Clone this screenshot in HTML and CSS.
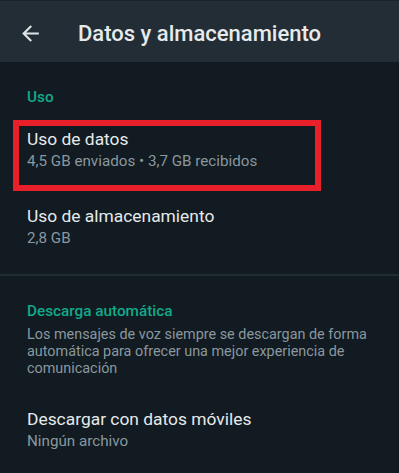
FILE: index.html
```html
<!DOCTYPE html>
<html lang="es">
<head>
<meta charset="utf-8">
<title>Datos y almacenamiento</title>
<link rel="stylesheet" href="styles.css">
</head>
<body>
<header class="topbar">
  <svg class="back" viewBox="0 0 24 24" width="25" height="25" aria-hidden="true"><path d="M20 11H7.83l5.59-5.59L12 4l-8 8 8 8 1.41-1.41L7.83 13H20v-2z" fill="#dfe4e6"/></svg>
  <h1 class="title">Datos y almacenamiento</h1>
</header>
<main>
  <section class="section first">
    <div class="label">Uso</div>
    <div class="item highlighted">
      <div class="item-title">Uso de datos</div>
      <div class="item-sub">4,5 GB enviados • 3,7 GB recibidos</div>
      <span class="mark"></span>
    </div>
    <div class="item">
      <div class="item-title">Uso de almacenamiento</div>
      <div class="item-sub">2,8 GB</div>
    </div>
  </section>
  <section class="section">
    <div class="label">Descarga automática</div>
    <p class="note">Los mensajes de voz siempre se descargan de forma automática para ofrecer una mejor experiencia de comunicación</p>
    <div class="item">
      <div class="item-title">Descargar con datos móviles</div>
      <div class="item-sub">Ningún archivo</div>
    </div>
  </section>
</main>
</body>
</html>
```

FILE: styles.css
```css
html, body {
  margin: 0;
  padding: 0;
  background: #111b21;
  font-family: Roboto, "Noto Sans", sans-serif;
}
.topbar {
  box-sizing: border-box;
  height: 62px;
  padding: 4px 0 0 18px;
  background: #222d35;
  border-top: 1px solid #1a232a;
  display: flex;
  align-items: center;
}
.back {
  display: block;
  flex: none;
}
.title {
  margin: 0 0 0 35px;
  font-size: 22px;
  line-height: 24px;
  font-weight: 500;
  color: #e6eaec;
}
.section {
  padding: 25px 0 9px;
}
.section + .section {
  border-top: 2px solid #202b32;
  padding-bottom: 0;
}
.label {
  padding: 0 27px;
  font-size: 15.3px;
  line-height: 20px;
  font-weight: 500;
  color: #13a98b;
  margin-bottom: 4px;
}
.note {
  margin: 5px 0 14px;
  padding: 0 27px;
  font-size: 14.4px;
  line-height: 17px;
  color: #8a979f;
}
.item {
  position: relative;
  padding: 17px 27px;
}
.item-title {
  font-size: 17.4px;
  line-height: 22px;
  color: #e6eaec;
}
.item-sub {
  margin-top: 1px;
  font-size: 15.2px;
  line-height: 20px;
  color: #8a979f;
}
.mark {
  position: absolute;
  left: 13px;
  top: 9px;
  width: 308px;
  height: 71px;
  box-sizing: border-box;
  border: 6px solid #e8202a;
}
```
